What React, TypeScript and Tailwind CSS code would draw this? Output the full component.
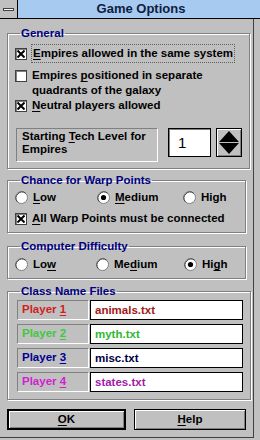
import React from 'react';

const font = { fontFamily: '"Liberation Sans", Arial, sans-serif' };

const CheckBox: React.FC<{ checked?: boolean }> = ({ checked }) => (
  <span className="w-[12px] h-[12px] shrink-0 bg-white border border-[#404040] shadow-[inset_1px_1px_0_#808080] flex items-center justify-center">
    {checked && (
      <svg width="8" height="8" viewBox="0 0 8 8">
        <path d="M0.5 0.5L7.5 7.5M7.5 0.5L0.5 7.5" stroke="#000" strokeWidth="2" />
      </svg>
    )}
  </span>
);

const Radio: React.FC<{ checked?: boolean }> = ({ checked }) => (
  <svg width="13" height="13" viewBox="0 0 13 13" className="shrink-0">
    <circle cx="6.5" cy="6.5" r="6" fill="#fff" stroke="#808080" />
    <path d="M2.3 10.7A6 6 0 0 1 10.7 2.3" fill="none" stroke="#404040" />
    {checked && <circle cx="6.5" cy="6.5" r="2.6" fill="#000" />}
  </svg>
);

const U: React.FC<{ children: React.ReactNode }> = ({ children }) => <span className="underline underline-offset-2">{children}</span>;

const Group: React.FC<{ title: string; className?: string; children: React.ReactNode }> = ({ title, className, children }) => (
  <fieldset className={`border border-[#808080] shadow-[inset_1px_1px_0_#fff,1px_1px_0_#fff] px-[7px] ${className || ''}`}>
    <legend className="ml-[5px] px-[1px] text-[#000080] leading-[14px]">{title}</legend>
    {children}
  </fieldset>
);

const RadioItem: React.FC<{ checked?: boolean; children: React.ReactNode }> = ({ checked, children }) => (
  <div className="flex items-center gap-[5px]">
    <Radio checked={checked} />
    <span>{children}</span>
  </div>
);

const players = [
  { n: '1', label: 'text-[#d02020]', file: 'animals.txt', fileColor: 'text-[#a01818]' },
  { n: '2', label: 'text-[#40c840]', file: 'myth.txt', fileColor: 'text-[#30b830]' },
  { n: '3', label: 'text-[#000090]', file: 'misc.txt', fileColor: 'text-[#000040]' },
  { n: '4', label: 'text-[#d020d0]', file: 'states.txt', fileColor: 'text-[#a020a8]' },
];

export default function App() {
  return (
    <div style={font} className="w-[260px] h-[440px] bg-[#c0c0c0] font-bold text-[11.5px] leading-[15px] text-black overflow-hidden">
      {/* title bar */}
      <div className="h-[19px] flex bg-[#a6caf0] border-b border-black">
        <div className="w-[18px] bg-[#c0c0c0] border-r border-black flex items-center justify-center">
          <span className="w-[11px] h-[3px] bg-white border border-[#404040]" />
        </div>
        <div className="flex-1 text-center text-[13px] leading-[18px] text-[#102040] pl-[4px]">Game Options</div>
      </div>

      <div className="w-[254px] h-[419px] border-r border-b border-[#404040] px-[7px] pt-[7px]">
        <Group title="General" className="pb-[6px]">
          <div className="mt-[4px] flex items-center gap-[4px]">
            <CheckBox checked />
            <span className="border border-dotted border-[#606060] px-[1px] py-[1px]"><U>E</U>mpires allowed in the same system</span>
          </div>
          <div className="mt-[5px] flex items-start gap-[5px]">
            <span className="mt-[2px]"><CheckBox /></span>
            <span>Empires <U>p</U>ositioned in separate<br />quadrants of the galaxy</span>
          </div>
          <div className="flex items-center gap-[5px]">
            <CheckBox checked />
            <span><U>N</U>eutral players allowed</span>
          </div>
          <div className="mt-[15px] flex items-start">
            <div className="w-[142px] h-[34px] ml-[1px] border border-[#808080] border-b-white border-r-white px-[5px] pt-[1px] leading-[13px]">
              Starting <U>T</U>ech Level for<br />Empires
            </div>
            <div className="w-[43px] h-[29px] ml-[10px] bg-white border border-black shadow-[inset_1px_1px_0_#808080] text-[15px] font-normal pl-[9px] leading-[27px]">1</div>
            <div className="w-[26px] h-[29px] ml-[5px] border border-black bg-[#c0c0c0] shadow-[inset_1px_1px_0_#fff,inset_-1px_-1px_0_#808080] flex flex-col items-center justify-center gap-[1px]">
              <svg width="20" height="11" viewBox="0 0 20 11"><path d="M10 0L20 11H0Z" fill="#000" /></svg>
              <svg width="20" height="11" viewBox="0 0 20 11"><path d="M0 0H20L10 11Z" fill="#000" /></svg>
            </div>
          </div>
        </Group>

        <Group title="Chance for Warp Points" className="mt-[4px] pb-[6px]">
          <div className="mt-[3px] grid grid-cols-[82px_86px_1fr]">
            <RadioItem><U>L</U>ow</RadioItem>
            <RadioItem checked><U>M</U>edium</RadioItem>
            <RadioItem>High</RadioItem>
          </div>
          <div className="mt-[6px] flex items-center gap-[5px]">
            <CheckBox checked />
            <span><U>A</U>ll Warp Points must be connected</span>
          </div>
        </Group>

        <Group title="Computer Difficulty" className="mt-[6px] pb-[6px]">
          <div className="mt-[4px] grid grid-cols-[81px_88px_1fr]">
            <RadioItem>Lo<U>w</U></RadioItem>
            <RadioItem>Me<U>d</U>ium</RadioItem>
            <RadioItem checked>Hi<U>g</U>h</RadioItem>
          </div>
        </Group>

        <Group title="Class Name Files" className="mt-[5px] pb-[7px]">
          <div className="mt-[2px] flex flex-col gap-[4px]">
            {players.map((p) => (
              <div key={p.n} className="flex h-[20px] ml-[2px]">
                <div className={`w-[72px] border border-[#808080] border-b-white border-r-white pl-[4px] leading-[16px] ${p.label}`}>
                  Player <U>{p.n}</U>
                </div>
                <div className={`w-[153px] ml-[1px] bg-white border border-black pl-[4px] leading-[18px] ${p.fileColor}`}>{p.file}</div>
              </div>
            ))}
          </div>
        </Group>

        <div className="mt-[9px] flex gap-[8px]">
          <button className="w-[121px] h-[21px] border-2 border-black bg-[#c0c0c0] shadow-[inset_1px_1px_0_#fff,inset_-1px_-1px_0_#808080] text-[11.5px] font-bold leading-[15px]"><U>O</U>K</button>
          <button className="w-[114px] h-[21px] border border-black bg-[#c0c0c0] shadow-[inset_1px_1px_0_#fff,inset_-1px_-1px_0_#808080] text-[11.5px] font-bold leading-[15px]"><U>H</U>elp</button>
        </div>
      </div>
    </div>
  );
}
